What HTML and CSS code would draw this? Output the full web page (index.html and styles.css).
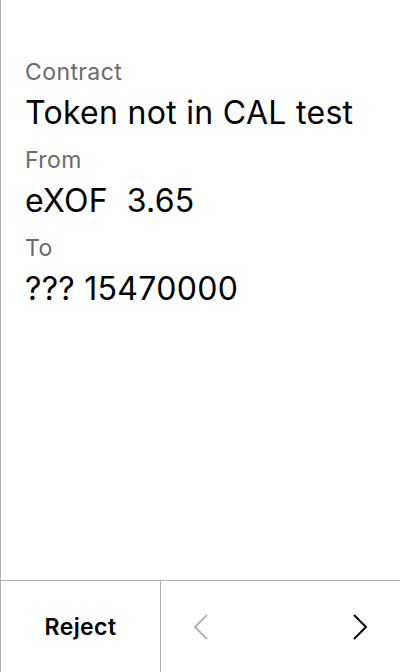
FILE: index.html
```html
<!DOCTYPE html>
<html>
<head>
<meta charset="utf-8">
<link rel="stylesheet" href="styles.css">
</head>
<body>
<div class="screen">
  <main class="content">
    <div class="label first">Contract</div>
    <div class="value">Token not in CAL test</div>
    <div class="label">From</div>
    <div class="value">eXOF&nbsp;&nbsp;3.65</div>
    <div class="label">To</div>
    <div class="value">??? 15470000</div>
  </main>
  <footer class="footer">
    <button class="reject">Reject</button>
    <div class="nav">
      <button class="nav-btn disabled" aria-label="Previous">
        <svg width="16" height="26" viewBox="0 0 16 26"><path d="M14 1 L2 13 L14 25" fill="none" stroke="currentColor" stroke-width="2"/></svg>
      </button>
      <button class="nav-btn" aria-label="Next">
        <svg width="16" height="26" viewBox="0 0 16 26"><path d="M2 1 L14 13 L2 25" fill="none" stroke="currentColor" stroke-width="2"/></svg>
      </button>
    </div>
  </footer>
</div>
</body>
</html>
```
FILE: styles.css
```css
* { box-sizing: border-box; }
html, body { margin: 0; padding: 0; background: #fff; }
body { font-family: Inter, "Noto Sans", sans-serif; color: #000; }
.screen {
  width: 400px;
  height: 672px;
  border-left: 1px solid #b3b3b3;
  display: flex;
  flex-direction: column;
}
.content {
  flex: 1;
  padding: 58px 20px 0 24px;
}
.label {
  font-size: 23px;
  line-height: 28px;
  letter-spacing: 0.4px;
  color: #6a6a6a;
  margin-top: 15px;
}
.label.first { margin-top: 0; }
.value {
  font-size: 32px;
  line-height: 36px;
  letter-spacing: 0.3px;
  margin-top: 9px;
  color: #000;
  white-space: nowrap;
}
.footer {
  height: 92px;
  border-top: 1px solid #b3b3b3;
  display: flex;
}
button {
  font-family: inherit;
  background: none;
  border: 0;
  padding: 0;
  margin: 0;
  cursor: pointer;
}
.reject {
  width: 160px;
  border-right: 1px solid #b3b3b3;
  font-size: 23px;
  font-weight: 600;
  letter-spacing: 0.4px;
  color: #000;
}
.nav {
  flex: 1;
  display: flex;
  justify-content: space-between;
}
.nav-btn {
  width: 80px;
  display: flex;
  align-items: center;
  justify-content: center;
  color: #000;
}
.nav-btn.disabled { color: #b3b3b3; }
```
